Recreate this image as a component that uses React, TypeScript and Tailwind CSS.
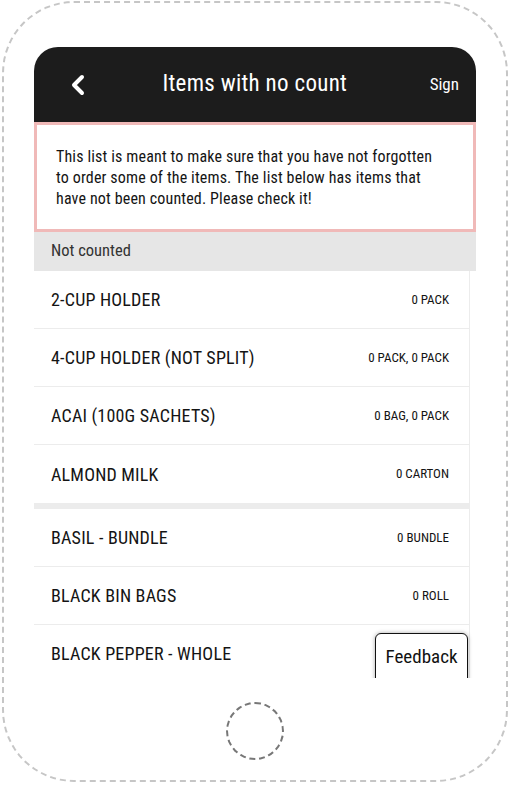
import React from "react";

const items1 = [
  { name: "2-CUP HOLDER", qty: "0 PACK" },
  { name: "4-CUP HOLDER (NOT SPLIT)", qty: "0 PACK, 0 PACK" },
  { name: "ACAI (100G SACHETS)", qty: "0 BAG, 0 PACK" },
  { name: "ALMOND MILK", qty: "0 CARTON" },
];
const items2 = [
  { name: "BASIL - BUNDLE", qty: "0 BUNDLE" },
  { name: "BLACK BIN BAGS", qty: "0 ROLL" },
  { name: "BLACK PEPPER - WHOLE", qty: "0 BAG" },
  { name: "BLUEBERRIES", qty: "0 PACK" },
];

function Row({ name, qty, last }: { name: string; qty: string; last?: boolean }) {
  return (
    <div
      className={
        "flex items-center justify-between h-[58px] pl-[17px] pr-[20px] bg-white " +
        (last ? "" : "border-b border-[#ececec]")
      }
    >
      <span className="text-[18px] tracking-[0.2px] text-[#141414]">{name}</span>
      <span className="text-[13px] text-[#141414]">{qty}</span>
    </div>
  );
}

export default function App() {
  return (
    <div
      className="w-[510px] h-[785px] bg-white relative overflow-hidden [font-stretch:condensed]"
      style={{ fontFamily: "Roboto, 'Liberation Sans', sans-serif" }}
    >
      <div className="absolute left-[2px] top-[1px] w-[506px] h-[781px] border-2 border-dashed border-[#c6c6c6] rounded-[72px]" />
      <div className="relative flex flex-col items-start pt-[47px] pl-[34px]">
        <div className="w-[442px] h-[631px] flex flex-col overflow-hidden relative">
          <div className="h-[75px] shrink-0 bg-[#1c1c1c] rounded-t-[24px] flex items-center px-[36px] text-white">
            <svg width="16" height="22" viewBox="0 0 16 22">
              <path d="M12 3 L4 11 L12 19" fill="none" stroke="white" strokeWidth="4" strokeLinecap="round" strokeLinejoin="round" />
            </svg>
            <div className="flex-1 text-center text-[23px] tracking-[0.3px] pr-[6px]">Items with no count</div>
            <span className="text-[17px] mr-[-19px]">Sign</span>
          </div>
          <div className="shrink-0 border-[3px] border-[#f0b9b8] bg-white pl-[19px] pr-[30px] pt-[21px] pb-[20px]">
            <p className="text-[16px] tracking-[0.15px] leading-[21px] text-[#141414]">
              This list is meant to make sure that you have not forgotten to order some of the items. The list below has items that have not been counted. Please check it!
            </p>
          </div>
          <div className="shrink-0 h-[39px] bg-[#e6e6e6] flex items-center pl-[17px] text-[16.5px] text-[#333]">
            Not counted
          </div>
          <div className="w-[436px] border-r border-[#ececec] bg-[#ececec] flex flex-col">
            {items1.map((it, i) => (
              <Row key={it.name} name={it.name} qty={it.qty} last={i === items1.length - 1} />
            ))}
            <div className="h-[6px] bg-[#ececec]" />
            {items2.map((it, i) => (
              <Row key={it.name} name={it.name} qty={it.qty} last={i === items2.length - 1} />
            ))}
          </div>
          <div className="absolute left-[341px] top-[586px] w-[93px] h-[56px] bg-white border border-[#111] rounded-t-[6px] shadow-[0_0_4px_rgba(0,0,0,0.35)] flex justify-center pt-[9px] text-[19px] text-[#111]">
            Feedback
          </div>
        </div>
      </div>
      <div className="absolute left-[226px] top-[702px] w-[58px] h-[58px] rounded-full border-2 border-dashed border-[#777]" />
    </div>
  );
}
